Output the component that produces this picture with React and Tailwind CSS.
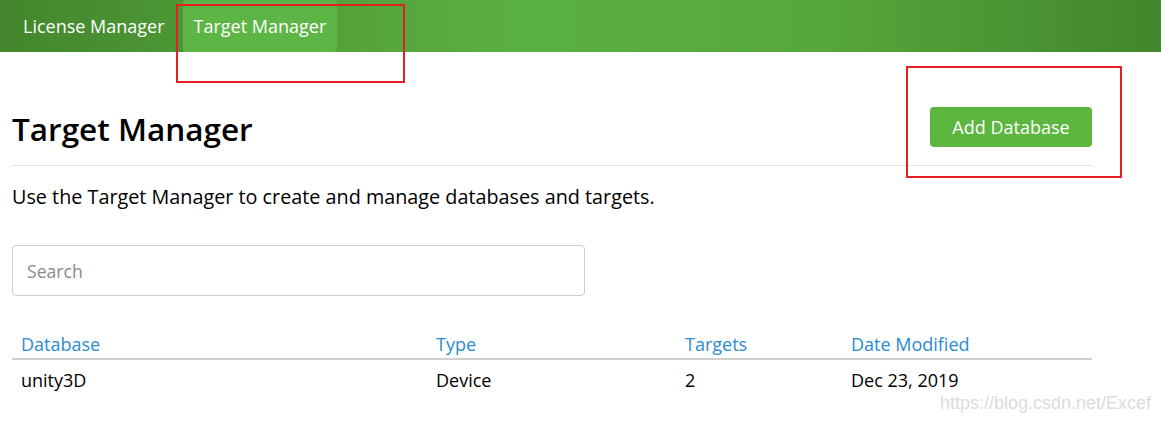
import React from "react";

const rows = [{ name: "unity3D", type: "Device", targets: 2, modified: "Dec 23, 2019" }];

const App = () => {
  return (
    <div className="relative min-h-[423px] w-[1161px] overflow-hidden bg-white text-black" style={{ fontFamily: '"Open Sans", sans-serif' }}>
      {/* top nav */}
      <nav className="flex h-[52px] items-stretch bg-[linear-gradient(90deg,#43862d_0%,#4f9b36_20%,#5bb042_45%,#56a83c_70%,#43862d_100%)] pl-[12px]">
        <a className="flex items-center px-[11px] text-[18px] text-white">License Manager</a>
        <a className="ml-[7px] flex items-center rounded-[3px] bg-[#5db545] px-[11px] text-[18px] text-white">Target Manager</a>
      </nav>

      <main className="px-[12px]">
        <div className="w-[1080px]">
          <div className="flex h-[114px] items-end justify-between border-b border-[#e3e3e3] pb-[18px]">
            <h1 className="mb-[-2px] text-[31.5px] font-semibold leading-[40px] text-black">Target Manager</h1>
            <button className="h-[40px] w-[162px] rounded-[4px] bg-[#5cb63f] text-[18px] text-white">Add Database</button>
          </div>
          <p className="mt-[17px] text-[19.8px] leading-[28px]">Use the Target Manager to create and manage databases and targets.</p>

          <input
            placeholder="Search"
            className="mt-[34px] h-[51px] w-[573px] rounded-[4px] border border-[#cccccc] px-[14px] text-[17.6px] outline-none placeholder:text-[#8a8a8a]"
          />

          <table className="mt-[35px] w-full border-collapse text-left text-[18px]">
            <thead>
              <tr className="border-b-2 border-[#cfcfcf] text-[#2b8bd3]">
                <th className="w-[424px] pb-[1px] pl-[9px] font-normal leading-[26px]">Database</th>
                <th className="w-[249px] pb-[1px] font-normal leading-[26px]">Type</th>
                <th className="w-[166px] pb-[1px] font-normal leading-[26px]">Targets</th>
                <th className="pb-[1px] font-normal leading-[26px]">Date Modified</th>
              </tr>
            </thead>
            <tbody>
              {rows.map((r) => (
                <tr key={r.name}>
                  <td className="pl-[9px] pt-[7px] leading-[26px]">{r.name}</td>
                  <td className="pt-[7px] leading-[26px]">{r.type}</td>
                  <td className="pt-[7px] leading-[26px]">{r.targets}</td>
                  <td className="pt-[7px] leading-[26px]">{r.modified}</td>
                </tr>
              ))}
            </tbody>
          </table>
        </div>
      </main>

      {/* annotation boxes */}
      <div className="absolute left-[176px] top-[4px] h-[79px] w-[229px] border-2 border-[#e61e25]" />
      <div className="absolute left-[906px] top-[66px] h-[112px] w-[216px] border-2 border-[#e61e25]" />

      {/* watermark */}
      <div className="absolute bottom-[6px] right-[10px] text-[18px] text-[#dcdcdc]" style={{ fontFamily: '"Liberation Sans", Arial, sans-serif' }}>
        https://blog.csdn.net/Excef
      </div>
    </div>
  );
};

export default App;
